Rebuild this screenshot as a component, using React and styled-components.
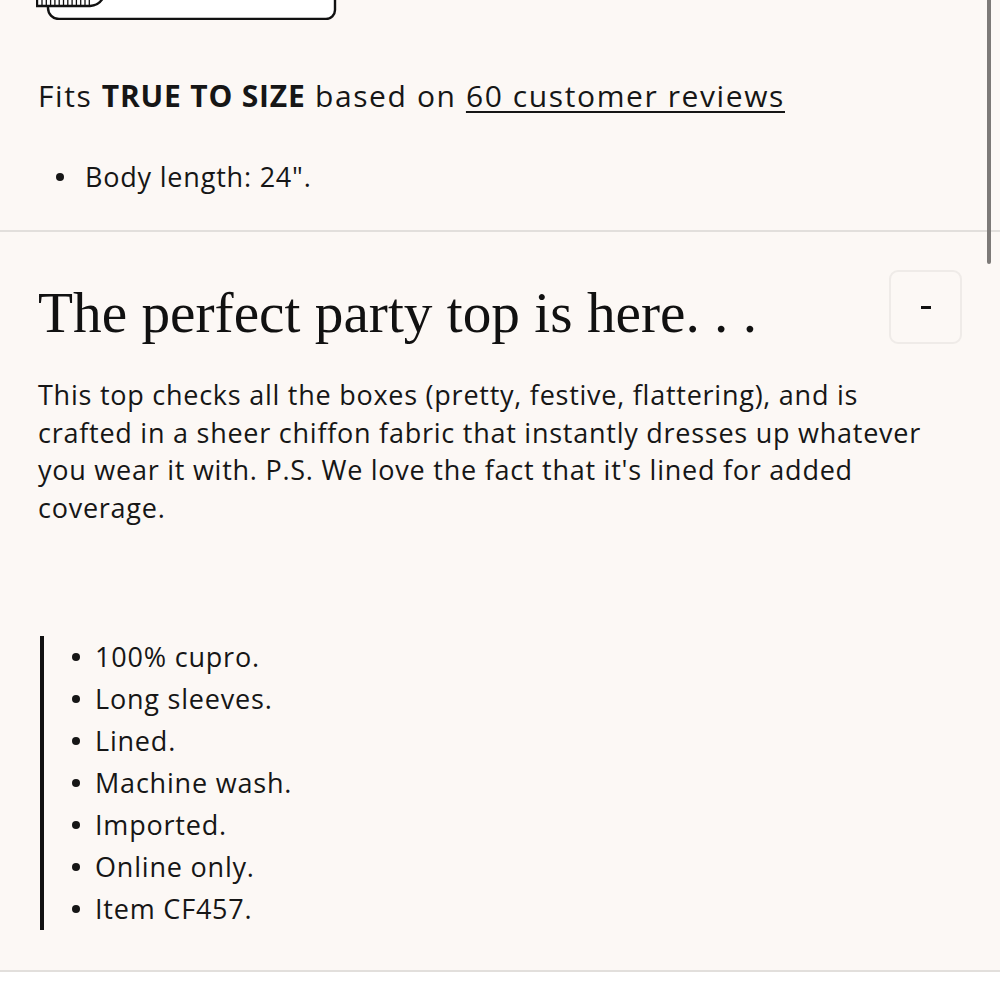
import React from "react";
import styled, { createGlobalStyle } from "styled-components";

const Global = createGlobalStyle`
  html, body { margin: 0; padding: 0; background: #ffffff; }
  body { font-family: "Open Sans", "Noto Sans", sans-serif; color: #161616; }
`;

const Page = styled.div`
  position: relative;
  width: 1000px;
  background: #fcf8f5;
  overflow: hidden;
`;

const Section = styled.section`
  padding: ${(p) => p.$pad};
  border-bottom: 2px solid #e2dfdc;
`;

const TapeArt = styled.svg`
  display: block;
  margin-left: -2px;
`;

const FitLine = styled.p`
  margin: 56px 0 0;
  font-size: 30px;
  line-height: 40px;
  letter-spacing: 1.6px;
`;

const Strong = styled.strong`
  font-weight: 700;
  letter-spacing: 0.8px;
`;

const Link = styled.a`
  color: inherit;
  text-decoration: underline;
  text-underline-offset: 4px;
  text-decoration-thickness: 2px;
`;

const BulletList = styled.ul`
  margin: ${(p) => p.$margin};
  padding: 0 0 0 ${(p) => p.$indent};
  list-style: none;
  font-size: 27px;
  letter-spacing: 0.8px;
  line-height: ${(p) => p.$lh};
  ${(p) => (p.$bar ? "border-left: 4px solid #111; margin-left: 2px;" : "")}
`;

const Item = styled.li`
  display: flex;
  align-items: center;
  &::before {
    content: "";
    flex: none;
    width: 8px;
    height: 8px;
    border-radius: 50%;
    background: #161616;
    margin-right: ${(p) => p.$gap};
  }
`;

const HeadRow = styled.div`
  display: flex;
  align-items: flex-start;
  justify-content: space-between;
`;

const Heading = styled.h2`
  margin: 11px 0 0;
  font-family: "Liberation Serif", "Times New Roman", serif;
  font-weight: 400;
  font-size: 57.3px;
  line-height: 64px;
  color: #111;
`;

const ToggleBtn = styled.button`
  width: 73px;
  height: 74px;
  border: 2px solid #efebe8;
  border-radius: 9px;
  background: #fcf8f5;
  display: flex;
  align-items: center;
  justify-content: center;
  padding: 0;
`;

const Dash = styled.span`
  display: block;
  width: 10px;
  height: 3px;
  background: #111;
`;

const Para = styled.p`
  margin: 31px 0 0;
  font-size: 27px;
  letter-spacing: 0.75px;
  line-height: 37.7px;
  max-width: 910px;
`;

const Scrollbar = styled.div`
  position: absolute;
  right: 9px;
  top: -10px;
  width: 4px;
  height: 274px;
  border-radius: 2px;
  background: #7d7a78;
`;

const Below = styled.div`
  height: 40px;
  background: #fff;
`;

export default function App() {
  const items = [
    "100% cupro.",
    "Long sleeves.",
    "Lined.",
    "Machine wash.",
    "Imported.",
    "Online only.",
    "Item CF457.",
  ];
  return (
    <>
      <Global />
      <Page>
        <Section $pad="0 38px 33px">
          <TapeArt width="302" height="20" viewBox="0 0 302 20">
            <path d="M12 -10 V8 A11 11 0 0 0 23 19 H290 A9 9 0 0 0 299 10 V-10" fill="#fff" stroke="#111" strokeWidth="2.4" />
            <path d="M1 -10 V6 H54 A16 16 0 0 0 67 -2 V-10" fill="#fff" stroke="#111" strokeWidth="2.4" />
            {Array.from({ length: 12 }).map((_, i) => (
              <line key={i} x1={6 + i * 4.3} y1="0" x2={6 + i * 4.3} y2="5" stroke="#111" strokeWidth="1.3" />
            ))}
          </TapeArt>
          <FitLine>
            Fits <Strong>TRUE TO SIZE</Strong> based on <Link>60 customer reviews</Link>
          </FitLine>
          <BulletList $margin="41px 0 0" $indent="18px" $lh="40px">
            <Item $gap="21px">Body length: 24".</Item>
          </BulletList>
        </Section>
        <Section $pad="38px 38px 40px">
          <HeadRow>
            <Heading>The perfect party top is here. . .</Heading>
            <ToggleBtn aria-label="collapse">
              <Dash />
            </ToggleBtn>
          </HeadRow>
          <Para>
            This top checks all the boxes (pretty, festive, flattering), and is crafted in a sheer chiffon
            fabric that instantly dresses up whatever you wear it with. P.S. We love the fact that it's lined
            for added coverage.
          </Para>
          <BulletList $margin="109px 0 0" $indent="28px" $lh="42px" $bar>
            {items.map((t) => (
              <Item key={t} $gap="15px">{t}</Item>
            ))}
          </BulletList>
        </Section>
        <Below />
        <Scrollbar />
      </Page>
    </>
  );
}
